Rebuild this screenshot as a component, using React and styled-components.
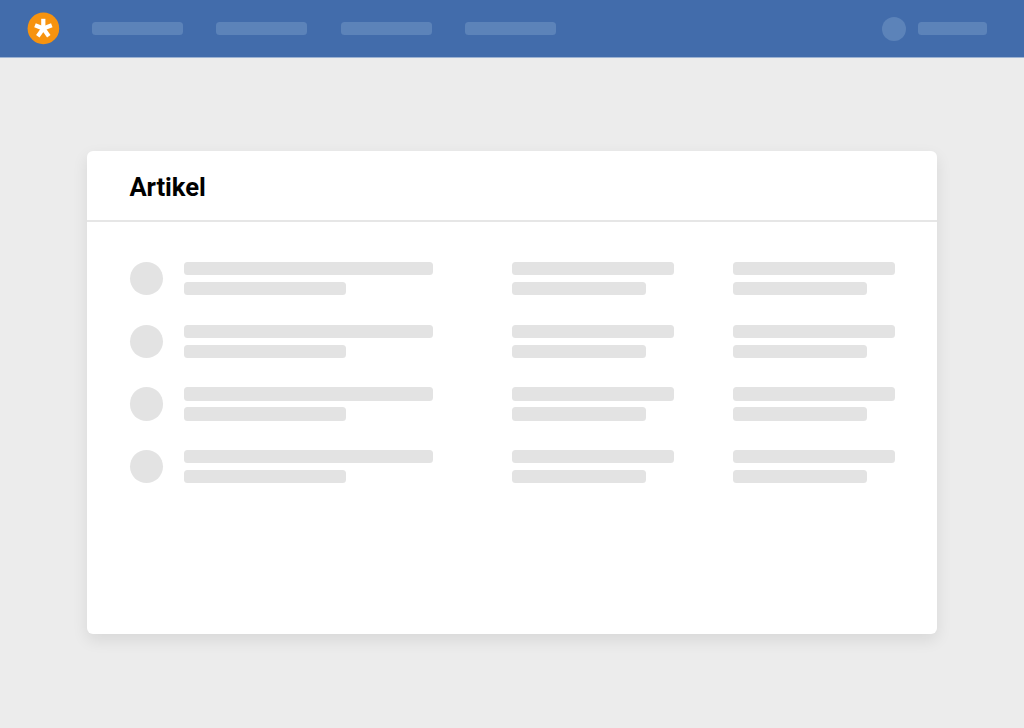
import React from "react";
import styled, { createGlobalStyle } from "styled-components";

const Global = createGlobalStyle`
  html, body { margin: 0; padding: 0; background: #ececec; }
  body { font-family: Roboto, "Liberation Sans", sans-serif; }
`;
const Page = styled.div`
  width: 1024px;
  height: 728px;
  overflow: hidden;
  background: #ececec;
`;
const TopBar = styled.header`
  height: 57px;
  background: #426cab;
  border-bottom: 1px solid #9db3d3;
  display: flex;
  align-items: center;
  padding: 0 37px 0 27px;
`;
const Logo = styled.svg`
  width: 33px;
  height: 33px;
  flex: none;
  margin-right: 32px;
`;
const NavGroup = styled.nav`
  display: flex;
  gap: 33.4px;
  flex: 1;
`;
const NavBar = styled.div`
  width: 91px;
  height: 13.4px;
  border-radius: 3.5px;
  background: #5c83b9;
`;
const User = styled.div`
  display: flex;
  align-items: center;
  gap: 12px;
`;
const Avatar = styled.div`
  width: 24px;
  height: 24px;
  border-radius: 50%;
  background: #5c83b9;
`;
const UserName = styled.div`
  width: 69.5px;
  height: 13.4px;
  border-radius: 3.5px;
  background: #5c83b9;
`;
const Card = styled.section`
  width: 850px;
  height: 483px;
  margin: 93px 0 0 87px;
  background: #fff;
  border-radius: 6px;
  box-shadow: 0 6px 16px rgba(0, 0, 0, 0.09);
`;
const CardHeader = styled.div`
  height: 69px;
  display: flex;
  align-items: center;
  padding: 2px 0 0 42.5px;
  box-sizing: content-box;
  height: 67px;
  border-bottom: 2px solid #e6e6e6;
`;
const Title = styled.h1`
  margin: 0;
  font-family: Roboto, sans-serif;
  font-size: 25.6px;
  font-weight: 700;
  letter-spacing: -0.08px;
  color: #000;
`;
const List = styled.div`
  padding: 40px 42.5px 0;
  display: flex;
  flex-direction: column;
  gap: 29.2px;
`;
const Row = styled.div`
  display: grid;
  grid-template-columns: 54.5px 328px 221px 161.5px;
  height: 33.4px;
`;
const Dot = styled.div`
  width: 33.4px;
  height: 33.4px;
  border-radius: 50%;
  background: #e3e3e3;
`;
const Stack = styled.div`
  display: flex;
  flex-direction: column;
  gap: 6.6px;
`;
const Line = styled.div`
  width: ${(p) => p.$w}px;
  height: 13.4px;
  border-radius: 3.5px;
  background: #e3e3e3;
`;

const items = ["a", "b", "c", "d"];

export default function App() {
  return (
    <Page>
      <Global />
      <TopBar>
        <Logo viewBox="0 0 33 33">
          <circle cx="16.4" cy="16.4" r="15.8" fill="#f7930f" />
          <g stroke="#fff" strokeWidth="4.2" strokeLinecap="butt">
            <line x1="16.3" y1="6.8" x2="16.3" y2="16.5" />
            <line x1="8" y1="13.3" x2="16.3" y2="16.5" />
            <line x1="24.8" y1="13.3" x2="16.3" y2="16.5" />
            <line x1="10.8" y1="24.2" x2="16.3" y2="16.5" />
            <line x1="21.8" y1="24.2" x2="16.3" y2="16.5" />
          </g>
        </Logo>
        <NavGroup>
          {items.map((k) => (
            <NavBar key={k} />
          ))}
        </NavGroup>
        <User>
          <Avatar />
          <UserName />
        </User>
      </TopBar>
      <Card>
        <CardHeader>
          <Title>Artikel</Title>
        </CardHeader>
        <List>
          {items.map((k) => (
            <Row key={k}>
              <Dot />
              <Stack>
                <Line $w={248.5} />
                <Line $w={162} />
              </Stack>
              <Stack>
                <Line $w={161.5} />
                <Line $w={134} />
              </Stack>
              <Stack>
                <Line $w={161.5} />
                <Line $w={134} />
              </Stack>
            </Row>
          ))}
        </List>
      </Card>
    </Page>
  );
}
